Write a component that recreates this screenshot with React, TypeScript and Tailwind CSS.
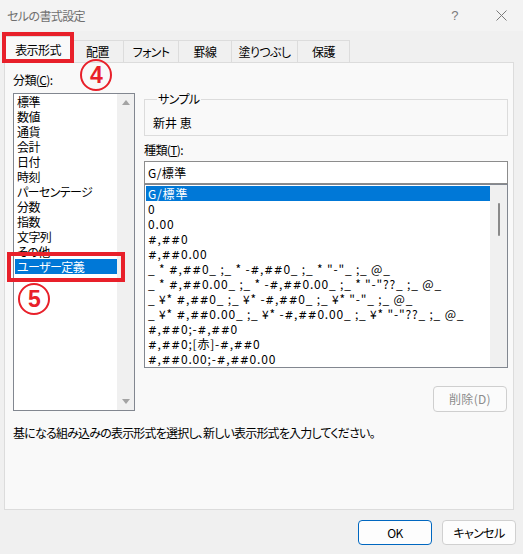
const categories = [
  "標準",
  "数値",
  "通貨",
  "会計",
  "日付",
  "時刻",
  "パーセンテージ",
  "分数",
  "指数",
  "文字列",
  "その他",
  "ユーザー定義",
];

const formats = [
  "G/標準",
  "0",
  "0.00",
  "#,##0",
  "#,##0.00",
  '_ * #,##0_ ;_ * -#,##0_ ;_ * "-"_ ;_ @_',
  '_ * #,##0.00_ ;_ * -#,##0.00_ ;_ * "-"??_ ;_ @_',
  '_ ¥* #,##0_ ;_ ¥* -#,##0_ ;_ ¥* "-"_ ;_ @_',
  '_ ¥* #,##0.00_ ;_ ¥* -#,##0.00_ ;_ ¥* "-"??_ ;_ @_',
  "#,##0;-#,##0",
  "#,##0;[赤]-#,##0",
  "#,##0.00;-#,##0.00",
];

const tabs = [
  { label: "配置", w: "w-[52px]" },
  { label: "フォント", w: "w-[55px]" },
  { label: "罫線", w: "w-[53px]" },
  { label: "塗りつぶし", w: "w-[66px]" },
  { label: "保護", w: "w-[52px]" },
];

// the dialog font draws "#" much wider than Noto does
function FormatText({ text }: { text: string }) {
  return (
    <>
      {text.split("").map((ch, i) =>
        ch === "#" ? (
          <span key={i} className="font-['DejaVu_Sans',sans-serif] text-[10.5px]">
            #
          </span>
        ) : (
          ch
        )
      )}
    </>
  );
}

function Circled({ n }: { n: string }) {
  return (
    <div className="w-[32px] h-[32px] rounded-full border-[2.5px] border-[#e8202a] flex items-center justify-center text-[#e8202a] text-[23px] font-bold leading-none font-['Liberation_Sans',sans-serif]">
      {n}
    </div>
  );
}

export default function App() {
  return (
    <div className="relative w-[523px] h-[554px] bg-[#f0f0f0] text-[12px] text-black font-['Noto_Sans_CJK_JP','Noto_Sans',sans-serif] [font-feature-settings:'palt'] tracking-[-0.6px] overflow-hidden">
      {/* ── Title bar ───────────────────────── */}
      <div className="h-[31px] flex items-center pl-[7px] pr-[16px] bg-[#f3f3f3]">
        <span className="text-[#6f6f6f] text-[12px]">セルの書式設定</span>
        <span className="ml-auto mr-[38px] text-[#7a7a7a] text-[13px] font-['Liberation_Sans',sans-serif]">?</span>
        <svg width="11" height="11" viewBox="0 0 11 11" className="mb-[1px]">
          <path d="M0.5 0.5 L10.5 10.5 M10.5 0.5 L0.5 10.5" stroke="#7a7a7a" strokeWidth="1" />
        </svg>
      </div>

      {/* ── Tabs ───────────────────────────── */}
      <div className="relative z-10 h-[31px] flex items-end pl-[4px]">
        <div className="w-[68px] h-[27px] -mb-px bg-[#f9f9f9] border-x border-t border-[#dcdcdc] flex items-center justify-center">
          表示形式
        </div>
        {tabs.map((t) => (
          <div
            key={t.label}
            className={`${t.w} h-[22px] border-t border-r border-[#dcdcdc] flex items-center justify-center`}
          >
            {t.label}
          </div>
        ))}
      </div>

      {/* ── Panel ──────────────────────────── */}
      <div className="ml-[4px] w-[510px] h-[448px] bg-[#f9f9f9] border border-[#dcdcdc] pl-[8px] pt-[9px]">
        <div className="flex gap-[9px]">
          {/* Left: categories */}
          <div className="w-[122px]">
            <div className="leading-[16px]">
              分類(<span className="underline">C</span>):
            </div>
            <div className="mt-[5px] h-[318px] bg-white border border-[#828790] flex">
              <div className="flex-1">
                {categories.map((c) => (
                  <div
                    key={c}
                    className={`h-[15px] leading-[15px] ml-px pl-[2px] whitespace-nowrap ${
                      c === "ユーザー定義" ? "bg-[#0078d7] text-white" : ""
                    }`}
                  >
                    {c}
                  </div>
                ))}
              </div>
              <div className="w-[17px] bg-[#f0f0f0] flex flex-col items-center justify-between py-[6px]">
                <svg width="8" height="5" viewBox="0 0 8 5">
                  <path d="M0 5 L4 0 L8 5 Z" fill="#a3a3a3" />
                </svg>
                <svg width="8" height="5" viewBox="0 0 8 5">
                  <path d="M0 0 L8 0 L4 5 Z" fill="#a3a3a3" />
                </svg>
              </div>
            </div>
          </div>

          {/* Right: sample and format types */}
          <div className="w-[364px]">
            <fieldset className="mt-[20px] border border-[#dcdcdc] pl-[8px] pb-[5px]">
              <legend className="ml-[4px] px-[1px] leading-[14px]">サンプル</legend>
              <div className="mt-[10px] leading-[14px] whitespace-pre tracking-[0px]">新井 恵</div>
            </fieldset>
            <div className="mt-[7px] leading-[14px]">
              種類(<span className="underline">T</span>):
            </div>
            <div className="mt-[4px] h-[23px] bg-white border border-[#8c8c8c] flex items-center pl-[3px] tracking-[0.4px]">
              G/標準
            </div>
            <div className="h-[184px] bg-white border border-[#828790] flex">
              <div className="flex-1 pt-px tracking-[0.8px]">
                {formats.map((f, i) => (
                  <div
                    key={f}
                    className={`h-[15px] leading-[15px] ml-px pl-[2px] whitespace-pre ${
                      i === 0 ? "bg-[#0078d7] text-white" : ""
                    }`}
                  >
                    <FormatText text={f} />
                  </div>
                ))}
              </div>
              <div className="w-[17px] bg-[#f0f0f0] flex justify-center pt-[18px]">
                <div className="w-[2px] h-[33px] rounded-full bg-[#8a8a8a]" />
              </div>
            </div>
            <div className="mt-[18px] flex justify-end pr-px">
              <div className="w-[74px] h-[26px] rounded-[4px] border border-[#cfcfcf] bg-[#fbfbfb] text-[#8c8c8c] tracking-[0.3px] flex items-center justify-center">
                削除(D)
              </div>
            </div>
          </div>
        </div>
        <div className="mt-[14px] leading-[14px] tracking-[-0.8px]">
          基になる組み込みの表示形式を選択し、新しい表示形式を入力してください。
        </div>
      </div>

      {/* ── Buttons ────────────────────────── */}
      <div className="mt-[10px] flex justify-end gap-[10px] pr-[7px]">
        <div className="w-[74px] h-[25px] rounded-[4px] border border-[#0067c0] bg-[#fdfdfd] flex items-center justify-center">
          OK
        </div>
        <div className="w-[74px] h-[25px] rounded-[4px] border border-[#d0d0d0] bg-[#fdfdfd] flex items-center justify-center">
          キャンセル
        </div>
      </div>

      {/* ── Annotations ────────────────────── */}
      <div className="absolute left-[2px] top-[32px] w-[72px] h-[31px] border-4 border-[#e8202a] z-20" />
      <div className="absolute left-[80px] top-[59px] z-20">
        <Circled n="4" />
      </div>
      <div className="absolute left-[7px] top-[252px] w-[118px] h-[30px] border-4 border-[#e8202a] z-20" />
      <div className="absolute left-[18px] top-[283px] z-20">
        <Circled n="5" />
      </div>
    </div>
  );
}
